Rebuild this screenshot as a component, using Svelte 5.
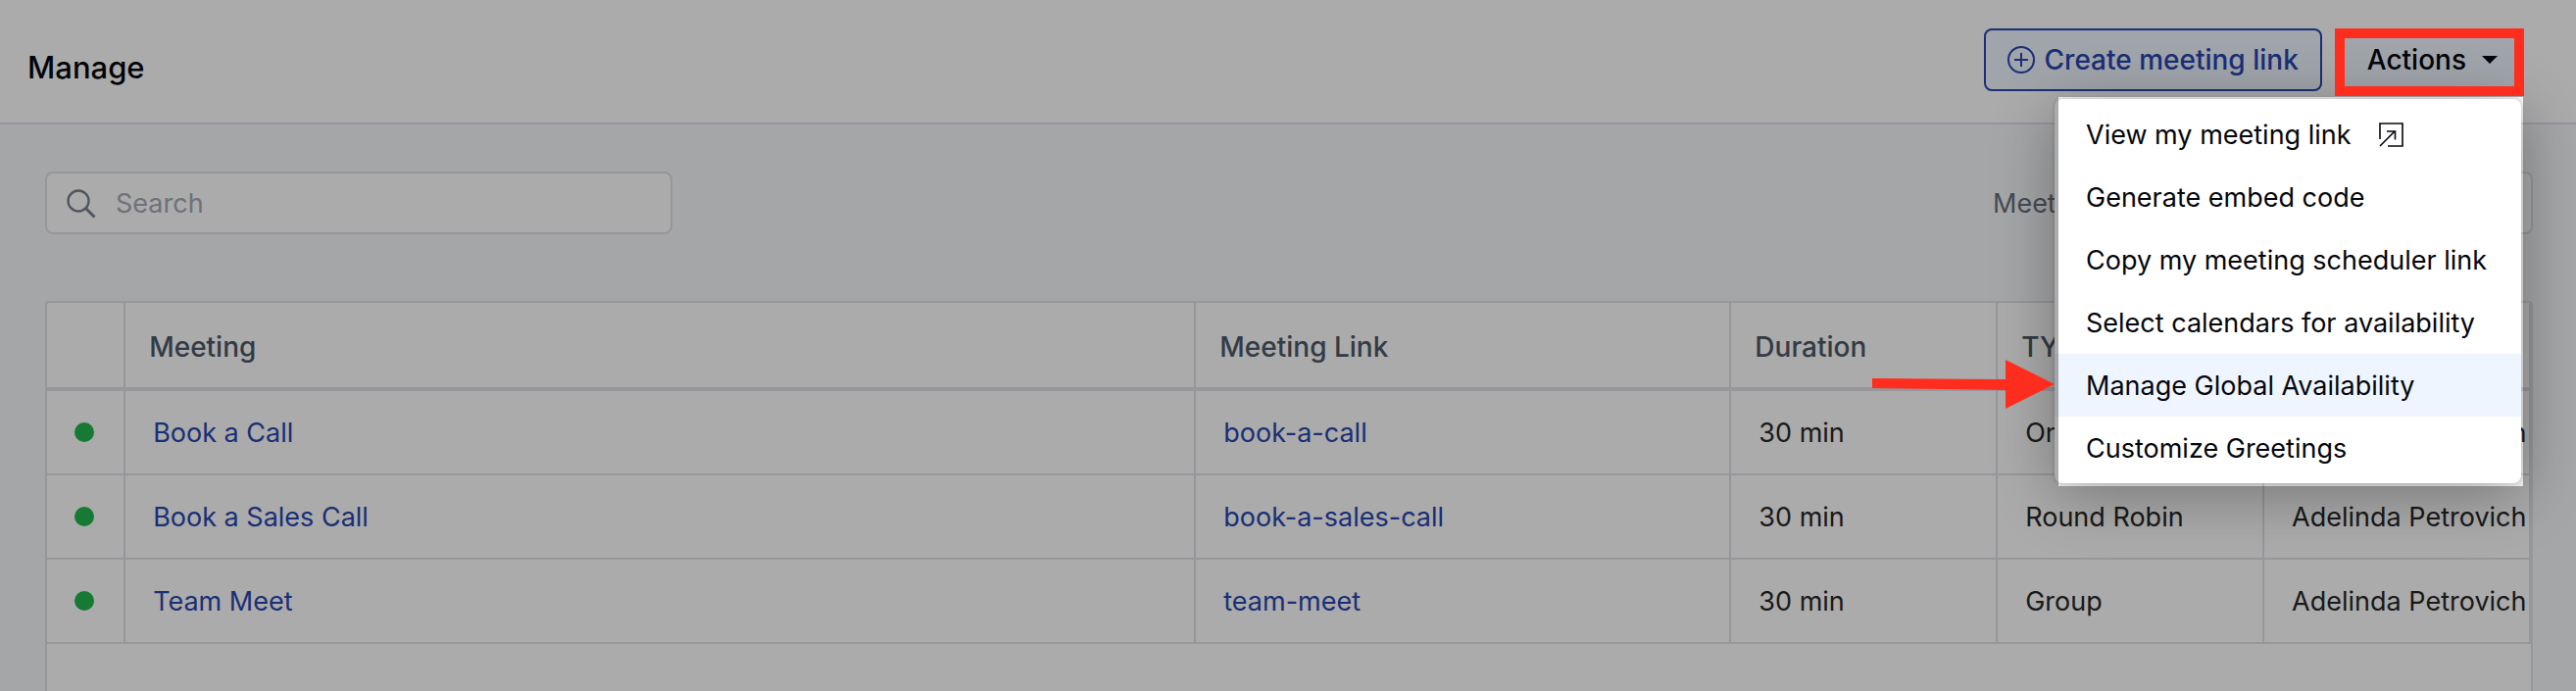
<script>
  const meetings = [
    { name: 'Book a Call', slug: 'book-a-call', duration: '30 min', type: 'One on One', owner: 'Adelinda Petrovich' },
    { name: 'Book a Sales Call', slug: 'book-a-sales-call', duration: '30 min', type: 'Round Robin', owner: 'Adelinda Petrovich' },
    { name: 'Team Meet', slug: 'team-meet', duration: '30 min', type: 'Group', owner: 'Adelinda Petrovich' },
  ];

  const actions = [
    { label: 'View my meeting link', external: true },
    { label: 'Generate embed code' },
    { label: 'Copy my meeting scheduler link' },
    { label: 'Select calendars for availability' },
    { label: 'Manage Global Availability' },
    { label: 'Customize Greetings' },
  ];

  let query = $state('');
  let open = $state(true);
  let active = $state('Manage Global Availability');

  let rows = $derived(
    meetings.filter((m) => m.name.toLowerCase().includes(query.toLowerCase())),
  );
</script>

<div class="page">
  <header class="topbar">
    <h1>Manage</h1>
    <div class="buttons">
      <button class="btn create" type="button">
        <svg width="28" height="28" viewBox="0 0 28 28" fill="none" stroke="currentColor" stroke-width="2" aria-hidden="true">
          <circle cx="14" cy="14" r="13" />
          <path d="M14 7v14M7 14h14" />
        </svg>
        Create meeting link
      </button>

      <div class="dropdown">
        <button class="btn actions" type="button" aria-expanded={open} onclick={() => (open = !open)}>
          Actions
          <svg width="16" height="8" viewBox="0 0 16 8" aria-hidden="true">
            <path d="M0 0h16L8 8z" fill="currentColor" />
          </svg>
        </button>
        <span class="frame"></span>

        {#if open}
          <ul class="menu">
            {#each actions as action}
              <li class:active={action.label === active}>
                <button type="button" onclick={() => (active = action.label)}>
                  {action.label}
                  {#if action.external}
                    <svg width="26" height="26" viewBox="0 0 26 26" fill="none" stroke="currentColor" stroke-width="1.6" aria-hidden="true">
                      <path d="M1 17V1h23v23H9" />
                      <path d="M1 24L16 9M8 9h8.500v8.500" />
                    </svg>
                  {/if}
                </button>
                {#if action.label === active}
                  <svg class="pointer" width="186" height="50" viewBox="0 0 186 50" aria-hidden="true">
                    <path d="M0 19L136 20V0L186 25L136 50V31L0 29z" fill="#ff2d1e" />
                  </svg>
                {/if}
              </li>
            {/each}
          </ul>
        {/if}
      </div>
    </div>
  </header>

  <main>
    <div class="toolbar">
      <label class="search">
        <svg width="30" height="30" viewBox="0 0 30 30" fill="none" stroke="currentColor" stroke-width="2.4" aria-hidden="true">
          <circle cx="12" cy="12" r="10.500" />
          <path d="M19.500 19.500l9 9" stroke-width="3" />
        </svg>
        <input type="text" placeholder="Search" aria-label="Search" bind:value={query} />
      </label>
      <div class="filter">
        <label for="meeting-filter">Meeting</label>
        <select id="meeting-filter">
          <option>All</option>
        </select>
      </div>
    </div>

    <div class="card">
      <table>
        <colgroup>
          <col class="col-status" />
          <col class="col-name" />
          <col class="col-link" />
          <col class="col-small" />
          <col class="col-small" />
          <col class="col-small" />
        </colgroup>
        <thead>
          <tr>
            <th></th>
            <th>Meeting</th>
            <th>Meeting Link</th>
            <th>Duration</th>
            <th>TYPE</th>
            <th>Owner</th>
          </tr>
        </thead>
        <tbody>
          {#each rows as row}
            <tr>
              <td class="status"><span class="dot"></span></td>
              <td><a href="#{row.slug}">{row.name}</a></td>
              <td><a href="#{row.slug}">{row.slug}</a></td>
              <td>{row.duration}</td>
              <td>{row.type}</td>
              <td>{row.owner}</td>
            </tr>
          {/each}
        </tbody>
      </table>
    </div>
  </main>
</div>

<style>
  :global(body) {
    margin: 0;
  }

  .page {
    --line: #e1e1e8;
    --link: #2846b0;
    --red: #ff2d1e;
    display: flex;
    flex-direction: column;
    height: 100vh;
    overflow: hidden;
    background: #f6f8fb;
    color: #05070c;
    font-family: Inter, 'Liberation Sans', sans-serif;
    font-size: 27px;
    line-height: 32px;
  }

  button,
  input,
  select {
    font: inherit;
    color: inherit;
    margin: 0;
    box-sizing: border-box;
  }

  .topbar {
    display: flex;
    align-items: flex-start;
    justify-content: space-between;
    padding: 29px 56px 32px 28px;
    background: #fff;
    border-bottom: 2px solid var(--line);
  }

  h1 {
    margin: 0;
    padding-top: 20px;
    font-size: 31px;
    line-height: 40px;
    font-weight: 500;
  }

  .buttons {
    display: flex;
    gap: 16px;
  }

  .btn {
    display: flex;
    align-items: center;
    height: 64px;
    border-radius: 8px;
    background: #eff5ff;
    font-size: 28px;
    font-weight: 500;
    white-space: nowrap;
  }

  .create {
    gap: 10px;
    padding: 0 22px;
    border: 2px solid var(--link);
    color: var(--link);
  }

  .dropdown {
    position: relative;
  }

  .actions {
    gap: 16px;
    padding: 0 24px 0 30px;
    border: 0;
  }

  .frame {
    position: absolute;
    inset: 0 -3px -5px -3px;
    border: 10px solid var(--red);
    z-index: 3;
    pointer-events: none;
  }

  .menu {
    position: absolute;
    top: 72px;
    right: 0;
    width: 476px;
    margin: 0;
    padding: 4px 0;
    box-sizing: border-box;
    list-style: none;
    background: #fff;
    border-radius: 8px;
    box-shadow: 0 0 4px rgba(0, 0, 0, 0.2), 0 12px 64px rgba(0, 0, 0, 0.32);
    z-index: 2;
  }

  /* Dims everything except the open menu. */
  .menu::after {
    content: '';
    position: absolute;
    inset: -2px -2px -3px 4px;
    box-shadow: 0 0 0 9999px rgba(0, 0, 0, 0.33);
    pointer-events: none;
  }

  .menu li {
    position: relative;
  }

  .menu li.active {
    background: #eff5ff;
  }

  .menu button {
    display: flex;
    align-items: center;
    gap: 28px;
    width: 100%;
    height: 64px;
    padding: 2px 0 0 32px;
    border: 0;
    background: none;
    text-align: left;
    white-space: nowrap;
  }

  .pointer {
    position: absolute;
    right: 100%;
    top: 6px;
    z-index: 3;
  }

  main {
    flex: 1;
    display: flex;
    flex-direction: column;
    gap: 68px;
    padding: 48px 44px 0 46px;
  }

  .toolbar {
    display: flex;
    justify-content: space-between;
  }

  .search {
    display: flex;
    align-items: center;
    gap: 20px;
    box-sizing: border-box;
    width: 640px;
    height: 64px;
    padding: 2px 20px 0;
    border: 2px solid var(--line);
    border-radius: 8px;
    background: #fff;
    color: #77818f;
  }

  .search input {
    flex: 1;
    min-width: 0;
    padding: 0;
    border: 0;
    outline: 0;
    background: none;
    color: #272727;
  }

  .search input::placeholder {
    color: #a4aab5;
    opacity: 1;
  }

  .filter {
    display: flex;
    align-items: center;
    gap: 24px;
    width: 551px;
    color: #68707a;
  }

  .filter label {
    padding-top: 2px;
  }

  .filter select {
    flex: 1;
    height: 64px;
    padding: 0 20px;
    border: 2px solid var(--line);
    border-radius: 8px;
    background: #fff;
    appearance: none;
  }

  .card {
    flex: 1;
    border: 2px solid var(--line);
    border-bottom: 0;
    border-radius: 4px 4px 0 0;
    background: #fff;
  }

  table {
    width: 100%;
    table-layout: fixed;
    border-collapse: separate;
    border-spacing: 0;
  }

  .col-status {
    width: 80px;
  }

  .col-name {
    width: 43.1%;
  }

  .col-link {
    width: 21.55%;
  }

  .col-small {
    width: 10.73%;
  }

  th,
  td {
    box-sizing: border-box;
    border-right: 2px solid var(--line);
    border-bottom: 2px solid var(--line);
    text-align: left;
    white-space: nowrap;
    overflow: hidden;
  }

  th {
    height: 90px;
    padding: 4px 0 0 24px;
    border-bottom-width: 4px;
    color: #4c5867;
    font-size: 28px;
    font-weight: 500;
  }

  td {
    height: 86px;
    padding: 2px 0 0 28px;
    color: #272727;
  }

  td.status {
    padding: 0 2px 0 0;
  }

  .dot {
    display: block;
    width: 20px;
    height: 20px;
    margin: 0 auto;
    border-radius: 50%;
    background: #21b64f;
  }

  a {
    color: var(--link);
    text-decoration: none;
  }
</style>
